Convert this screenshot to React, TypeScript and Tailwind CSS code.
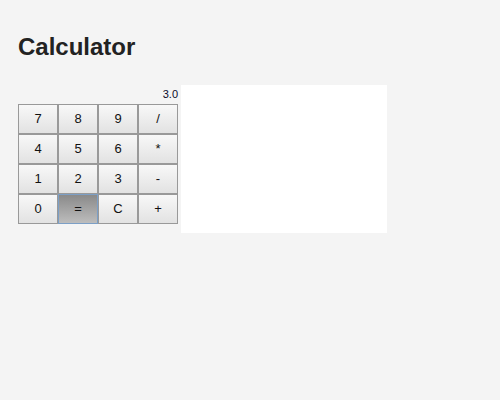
import React from "react";

const rows = [
  ["7", "8", "9", "/"],
  ["4", "5", "6", "*"],
  ["1", "2", "3", "-"],
  ["0", "=", "C", "+"],
];

export default function App() {
  return (
    <div
      className="min-h-[400px] w-[500px] bg-[#f4f4f4] pl-[18px] pt-[33px] text-[#111]"
      style={{ fontFamily: '"Liberation Sans", Arial, sans-serif' }}
    >
      <h1 className="m-0 text-[24px] font-bold leading-[28px] text-[#222]">Calculator</h1>
      <div className="mt-[24px] flex items-start gap-[3px]">
        <div className="flex w-[160px] flex-col">
          <div className="h-[19px] text-right text-[11px] leading-[19px] text-[#0a0a2a]">3.0</div>
          <div className="grid grid-cols-[repeat(4,40px)]">
            {rows.flat().map((k) =>
              k === "=" ? (
                <button
                  key={k}
                  className="h-[30px] w-[40px] border border-[#7c9fc6] bg-gradient-to-b from-[#8a8a8a] to-[#bdbdbd] text-[13px] text-[#111]"
                >
                  {k}
                </button>
              ) : (
                <button
                  key={k}
                  className="h-[30px] w-[40px] border border-[#999] bg-gradient-to-b from-[#f8f8f8] to-[#e2e2e2] text-[13px] text-[#111]"
                >
                  {k}
                </button>
              )
            )}
          </div>
        </div>
        <div className="h-[148px] w-[206px] bg-white" />
      </div>
    </div>
  );
}
